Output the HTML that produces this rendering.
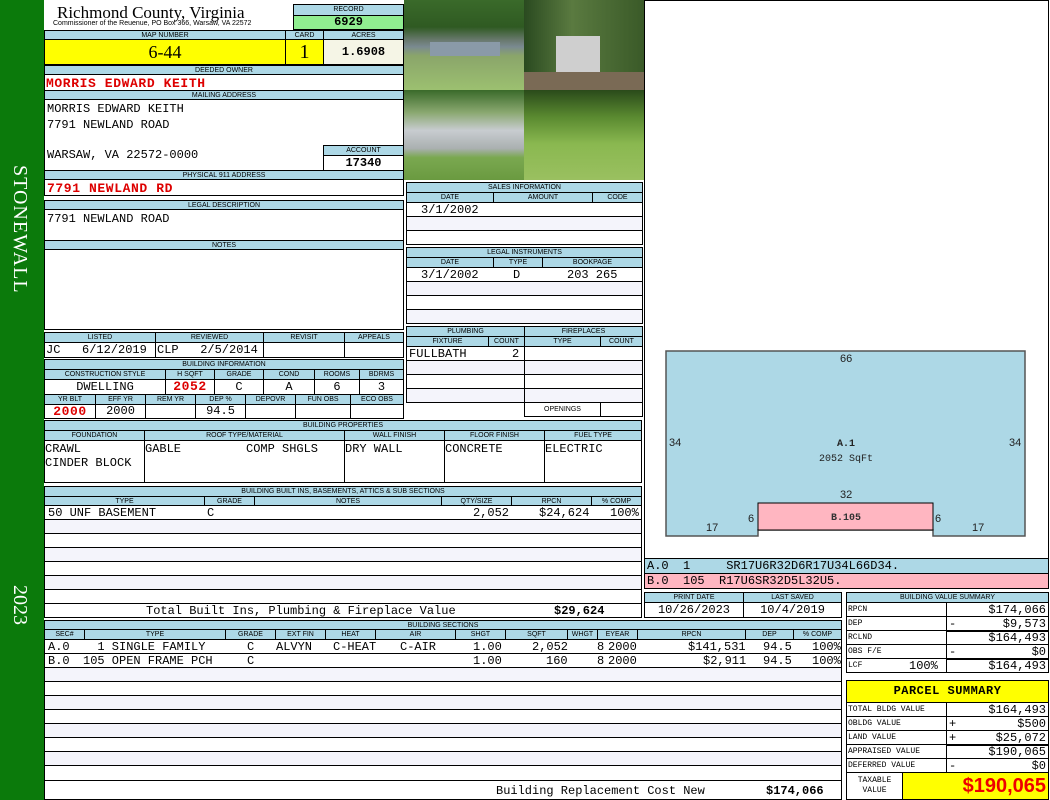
<!DOCTYPE html>
<html><head><meta charset="utf-8"><style>
*{margin:0;padding:0}
body{width:1050px;height:800px;position:relative;background:#fff;overflow:hidden;font-family:"Liberation Sans",sans-serif}
.b{position:absolute;box-sizing:border-box;border:1px solid #000;overflow:hidden;white-space:nowrap}
.h{background:#add8e6;font-size:7px;text-align:center;line-height:9px}
.m{font-family:"Liberation Mono",monospace;font-size:12px}
.r{color:#d00;font-weight:bold;font-size:13px;letter-spacing:0.6px}
.w{background:#fff}
.alt{background:#f4f4fb}
.g{color:#fff;font-family:"Liberation Serif",serif;font-size:20px;position:absolute}
</style></head><body>
<div style="position:absolute;left:0;top:0;width:44px;height:800px;background:#0b7a0b"></div>
<div class="g" style="left:8px;top:165px;writing-mode:vertical-rl;letter-spacing:1px">STONEWALL</div>
<div class="g" style="left:8px;top:585px;writing-mode:vertical-rl">2023</div>

<div style="position:absolute;left:57px;top:3px;font:17px 'Liberation Serif',serif">Richmond County, Virginia</div>
<div style="position:absolute;left:53px;top:20px;font-size:7px">Commissioner of the Reuenue, PO Box 366, Warsaw, VA 22572</div>
<div class="b h" style="left:293px;top:4px;width:111px;height:12px">RECORD</div>
<div class="b m" style="left:293px;top:15px;width:111px;height:15px;background:#90ee90;text-align:center;font-weight:bold;line-height:13px">6929</div>

<div class="b h" style="left:44px;top:30px;width:242px;height:10px">MAP NUMBER</div>
<div class="b h" style="left:285px;top:30px;width:39px;height:10px">CARD</div>
<div class="b h" style="left:323px;top:30px;width:81px;height:10px">ACRES</div>
<div class="b" style="left:44px;top:39px;width:242px;height:26px;background:#ff0;text-align:center;font:18px 'Liberation Serif',serif;line-height:24px">6-44</div>
<div class="b" style="left:285px;top:39px;width:39px;height:26px;background:#ff0;text-align:center;font:20px 'Liberation Serif',serif;line-height:24px">1</div>
<div class="b m" style="left:323px;top:39px;width:81px;height:26px;background:#f5f5e6;text-align:center;font-weight:bold;line-height:24px">1.6908</div>

<div class="b h" style="left:44px;top:65px;width:360px;height:10px">DEEDED OWNER</div>
<div class="b m r" style="left:44px;top:74px;width:360px;height:17px;line-height:17px;padding-left:1px">MORRIS EDWARD KEITH</div>
<div class="b h" style="left:44px;top:90px;width:360px;height:10px">MAILING ADDRESS</div>
<div class="b m" style="left:44px;top:99px;width:360px;height:72px;padding:2px 0 0 2px;line-height:15.5px">MORRIS EDWARD KEITH<br>7791 NEWLAND ROAD<br><br><span style="position:relative;top:-1px">WARSAW, VA 22572-0000</span></div>
<div class="b h" style="left:323px;top:145px;width:81px;height:11px">ACCOUNT</div>
<div class="b m" style="left:323px;top:155px;width:81px;height:16px;text-align:center;font-weight:bold;line-height:15px">17340</div>
<div class="b h" style="left:44px;top:170px;width:360px;height:10px">PHYSICAL 911 ADDRESS</div>
<div class="b m r" style="left:44px;top:179px;width:360px;height:17px;line-height:17px;padding-left:2px">7791 NEWLAND RD</div>

<div class="b h" style="left:44px;top:200px;width:360px;height:10px">LEGAL DESCRIPTION</div>
<div class="b m" style="left:44px;top:209px;width:360px;height:32px;padding:2px 0 0 2px">7791 NEWLAND ROAD</div>
<div class="b h" style="left:44px;top:240px;width:360px;height:10px">NOTES</div>
<div class="b" style="left:44px;top:249px;width:360px;height:81px"></div>

<div class="b h" style="left:44px;top:332px;width:112px;height:11px">LISTED</div>
<div class="b h" style="left:155px;top:332px;width:109px;height:11px">REVIEWED</div>
<div class="b h" style="left:263px;top:332px;width:82px;height:11px">REVISIT</div>
<div class="b h" style="left:344px;top:332px;width:60px;height:11px">APPEALS</div>
<div class="b m" style="left:44px;top:342px;width:112px;height:16px;line-height:14px;padding-left:1px">JC &nbsp;&nbsp;6/12/2019</div>
<div class="b m" style="left:155px;top:342px;width:109px;height:16px;line-height:14px;padding-left:1px">CLP &nbsp;&nbsp;2/5/2014</div>
<div class="b" style="left:263px;top:342px;width:82px;height:16px"></div>
<div class="b" style="left:344px;top:342px;width:60px;height:16px"></div>

<div class="b h" style="left:44px;top:359px;width:360px;height:11px">BUILDING INFORMATION</div>
<div class="b h" style="left:44px;top:369px;width:122px;height:11px">CONSTRUCTION STYLE</div>
<div class="b h" style="left:165px;top:369px;width:50px;height:11px">H SQFT</div>
<div class="b h" style="left:214px;top:369px;width:50px;height:11px">GRADE</div>
<div class="b h" style="left:263px;top:369px;width:52px;height:11px">COND</div>
<div class="b h" style="left:314px;top:369px;width:46px;height:11px">ROOMS</div>
<div class="b h" style="left:359px;top:369px;width:45px;height:11px">BDRMS</div>
<div class="b m" style="left:44px;top:379px;width:122px;height:16px;text-align:center;line-height:14px">DWELLING</div>
<div class="b m r" style="left:165px;top:379px;width:50px;height:16px;text-align:center;line-height:14px">2052</div>
<div class="b m" style="left:214px;top:379px;width:50px;height:16px;text-align:center;line-height:14px">C</div>
<div class="b m" style="left:263px;top:379px;width:52px;height:16px;text-align:center;line-height:14px">A</div>
<div class="b m" style="left:314px;top:379px;width:46px;height:16px;text-align:center;line-height:14px">6</div>
<div class="b m" style="left:359px;top:379px;width:45px;height:16px;text-align:center;line-height:14px">3</div>
<div class="b h" style="left:44px;top:394px;width:52px;height:11px">YR BLT</div>
<div class="b h" style="left:95px;top:394px;width:51px;height:11px">EFF YR</div>
<div class="b h" style="left:145px;top:394px;width:51px;height:11px">REM YR</div>
<div class="b h" style="left:195px;top:394px;width:51px;height:11px">DEP %</div>
<div class="b h" style="left:245px;top:394px;width:51px;height:11px">DEPOVR</div>
<div class="b h" style="left:295px;top:394px;width:56px;height:11px">FUN OBS</div>
<div class="b h" style="left:350px;top:394px;width:54px;height:11px">ECO OBS</div>
<div class="b m r" style="left:44px;top:404px;width:52px;height:15px;text-align:center;line-height:13px">2000</div>
<div class="b m" style="left:95px;top:404px;width:51px;height:15px;text-align:center;line-height:13px">2000</div>
<div class="b" style="left:145px;top:404px;width:51px;height:15px"></div>
<div class="b m" style="left:195px;top:404px;width:51px;height:15px;text-align:center;line-height:13px">94.5</div>
<div class="b" style="left:245px;top:404px;width:51px;height:15px"></div>
<div class="b" style="left:295px;top:404px;width:56px;height:15px"></div>
<div class="b" style="left:350px;top:404px;width:54px;height:15px"></div>

<div class="b h" style="left:44px;top:420px;width:598px;height:11px">BUILDING PROPERTIES</div>
<div class="b h" style="left:44px;top:430px;width:101px;height:11px">FOUNDATION</div>
<div class="b h" style="left:144px;top:430px;width:201px;height:11px">ROOF TYPE/MATERIAL</div>
<div class="b h" style="left:344px;top:430px;width:101px;height:11px">WALL FINISH</div>
<div class="b h" style="left:444px;top:430px;width:101px;height:11px">FLOOR FINISH</div>
<div class="b h" style="left:544px;top:430px;width:98px;height:11px">FUEL TYPE</div>
<div class="b m" style="left:44px;top:440px;width:101px;height:43px;line-height:14px;padding-top:1px">CRAWL<br>CINDER BLOCK</div>
<div class="b m" style="left:144px;top:440px;width:201px;height:43px;line-height:14px;padding-top:1px">GABLE<span style="position:absolute;left:101px">COMP SHGLS</span></div>
<div class="b m" style="left:344px;top:440px;width:101px;height:43px;line-height:14px;padding-top:1px">DRY WALL</div>
<div class="b m" style="left:444px;top:440px;width:101px;height:43px;line-height:14px;padding-top:1px">CONCRETE</div>
<div class="b m" style="left:544px;top:440px;width:98px;height:43px;line-height:14px;padding-top:1px">ELECTRIC</div>

<div class="b h" style="left:44px;top:486px;width:598px;height:11px">BUILDING BUILT INS, BASEMENTS, ATTICS &amp; SUB SECTIONS</div>
<div class="b h" style="left:44px;top:496px;width:161px;height:10px">TYPE</div>
<div class="b h" style="left:204px;top:496px;width:51px;height:10px">GRADE</div>
<div class="b h" style="left:254px;top:496px;width:188px;height:10px">NOTES</div>
<div class="b h" style="left:441px;top:496px;width:71px;height:10px">QTY/SIZE</div>
<div class="b h" style="left:511px;top:496px;width:81px;height:10px">RPCN</div>
<div class="b h" style="left:591px;top:496px;width:51px;height:10px">% COMP</div>
<div class="b m" style="left:44px;top:505px;width:598px;height:15px;line-height:14px;padding-left:3px">50 UNF BASEMENT<span style="position:absolute;left:162px">C</span><span style="position:absolute;left:428px">2,052</span><span style="position:absolute;left:494px">$24,624</span><span style="position:absolute;left:565px">100%</span></div>
<div class="b alt" style="left:44px;top:519px;width:598px;height:15px"></div>
<div class="b" style="left:44px;top:533px;width:598px;height:15px"></div>
<div class="b alt" style="left:44px;top:547px;width:598px;height:15px"></div>
<div class="b" style="left:44px;top:561px;width:598px;height:15px"></div>
<div class="b alt" style="left:44px;top:575px;width:598px;height:15px"></div>
<div class="b" style="left:44px;top:589px;width:598px;height:15px"></div>
<div class="b m" style="left:44px;top:603px;width:598px;height:15px;line-height:14px"><span style="position:absolute;left:101px">Total Built Ins, Plumbing &amp; Fireplace Value</span><span style="position:absolute;left:509px;font-weight:bold">$29,624</span></div>

<div class="b h" style="left:44px;top:620px;width:798px;height:10px">BUILDING SECTIONS</div>
<div class="b h" style="left:44px;top:629px;width:41px;height:11px">SEC#</div>
<div class="b h" style="left:84px;top:629px;width:142px;height:11px">TYPE</div>
<div class="b h" style="left:225px;top:629px;width:51px;height:11px">GRADE</div>
<div class="b h" style="left:275px;top:629px;width:51px;height:11px">EXT FIN</div>
<div class="b h" style="left:325px;top:629px;width:51px;height:11px">HEAT</div>
<div class="b h" style="left:375px;top:629px;width:81px;height:11px">AIR</div>
<div class="b h" style="left:455px;top:629px;width:51px;height:11px">SHGT</div>
<div class="b h" style="left:505px;top:629px;width:63px;height:11px">SQFT</div>
<div class="b h" style="left:567px;top:629px;width:31px;height:11px">WHGT</div>
<div class="b h" style="left:597px;top:629px;width:41px;height:11px">EYEAR</div>
<div class="b h" style="left:637px;top:629px;width:109px;height:11px">RPCN</div>
<div class="b h" style="left:745px;top:629px;width:49px;height:11px">DEP</div>
<div class="b h" style="left:793px;top:629px;width:49px;height:11px">% COMP</div>
<div class="b m" style="left:44px;top:639px;width:798px;height:15px;line-height:14px;padding-left:3px">A.0<span style="position:absolute;left:38px">&nbsp;&nbsp;1 SINGLE FAMILY</span><span style="position:absolute;left:202px">C</span><span style="position:absolute;left:231px">ALVYN</span><span style="position:absolute;left:288px">C-HEAT</span><span style="position:absolute;left:355px">C-AIR</span><span style="position:absolute;left:428px">1.00</span><span style="position:absolute;left:487px">2,052</span><span style="position:absolute;left:552px">8</span><span style="position:absolute;left:563px">2000</span><span style="position:absolute;left:643px">$141,531</span><span style="position:absolute;left:718px">94.5</span><span style="position:absolute;left:767px">100%</span></div>
<div class="b m" style="left:44px;top:653px;width:798px;height:15px;line-height:14px;padding-left:3px">B.0<span style="position:absolute;left:38px">105 OPEN FRAME PCH</span><span style="position:absolute;left:202px">C</span><span style="position:absolute;left:428px">1.00</span><span style="position:absolute;left:501px">160</span><span style="position:absolute;left:552px">8</span><span style="position:absolute;left:563px">2000</span><span style="position:absolute;left:658px">$2,911</span><span style="position:absolute;left:718px">94.5</span><span style="position:absolute;left:767px">100%</span></div>
<div class="b alt" style="left:44px;top:667px;width:798px;height:15px"></div>
<div class="b" style="left:44px;top:681px;width:798px;height:15px"></div>
<div class="b alt" style="left:44px;top:695px;width:798px;height:15px"></div>
<div class="b" style="left:44px;top:709px;width:798px;height:15px"></div>
<div class="b alt" style="left:44px;top:723px;width:798px;height:15px"></div>
<div class="b" style="left:44px;top:737px;width:798px;height:15px"></div>
<div class="b alt" style="left:44px;top:751px;width:798px;height:15px"></div>
<div class="b" style="left:44px;top:765px;width:798px;height:16px"></div>
<div class="b m" style="left:44px;top:780px;width:798px;height:20px;line-height:20px"><span style="position:absolute;left:451px">Building Replacement Cost New</span><span style="position:absolute;left:721px;font-weight:bold">$174,066</span></div>

<div style="position:absolute;left:404px;top:0;width:120px;height:90px;background:linear-gradient(#3a6a2a 0,#2f5a22 30%,#6a7a70 45%,#7a8a90 52%,#8aa56a 62%,#9cc070 100%)"></div>
<div style="position:absolute;left:430px;top:42px;width:70px;height:14px;background:#8a9aa8"></div>
<div style="position:absolute;left:524px;top:0;width:120px;height:90px;background:linear-gradient(90deg,#2a4a20,#5a7a40 40%,#3a5a28)"></div>
<div style="position:absolute;left:556px;top:36px;width:44px;height:38px;background:#cfcfcf"></div>
<div style="position:absolute;left:524px;top:72px;width:120px;height:18px;background:#7a6a55"></div>
<div style="position:absolute;left:404px;top:90px;width:120px;height:90px;background:linear-gradient(#3a6a2a 0,#8aa870 25%,#c8ccd0 45%,#aab0b0 65%,#7aa850 75%,#6a9a40 100%)"></div>
<div style="position:absolute;left:524px;top:90px;width:120px;height:90px;background:linear-gradient(#2a4a1a 0,#5a8a30 30%,#8ab850 60%,#9ac060 100%)"></div>

<div class="b h" style="left:406px;top:182px;width:237px;height:11px">SALES INFORMATION</div>
<div class="b h" style="left:406px;top:192px;width:88px;height:11px">DATE</div>
<div class="b h" style="left:493px;top:192px;width:100px;height:11px">AMOUNT</div>
<div class="b h" style="left:592px;top:192px;width:51px;height:11px">CODE</div>
<div class="b m" style="left:406px;top:202px;width:237px;height:15px;line-height:14px;padding-left:14px">3/1/2002</div>
<div class="b alt" style="left:406px;top:216px;width:237px;height:15px"></div>
<div class="b" style="left:406px;top:230px;width:237px;height:15px"></div>
<div class="b h" style="left:406px;top:247px;width:237px;height:11px">LEGAL INSTRUMENTS</div>
<div class="b h" style="left:406px;top:257px;width:88px;height:11px">DATE</div>
<div class="b h" style="left:493px;top:257px;width:50px;height:11px">TYPE</div>
<div class="b h" style="left:542px;top:257px;width:101px;height:11px">BOOKPAGE</div>
<div class="b m" style="left:406px;top:267px;width:237px;height:15px;line-height:14px;padding-left:14px">3/1/2002<span style="position:absolute;left:106px">D</span><span style="position:absolute;left:160px">203 265</span></div>
<div class="b alt" style="left:406px;top:281px;width:237px;height:15px"></div>
<div class="b" style="left:406px;top:295px;width:237px;height:15px"></div>
<div class="b alt" style="left:406px;top:309px;width:237px;height:15px"></div>

<div class="b h" style="left:406px;top:326px;width:119px;height:11px">PLUMBING</div>
<div class="b h" style="left:524px;top:326px;width:119px;height:11px">FIREPLACES</div>
<div class="b h" style="left:406px;top:336px;width:83px;height:11px">FIXTURE</div>
<div class="b h" style="left:488px;top:336px;width:37px;height:11px">COUNT</div>
<div class="b h" style="left:524px;top:336px;width:77px;height:11px">TYPE</div>
<div class="b h" style="left:600px;top:336px;width:43px;height:11px">COUNT</div>
<div class="b m" style="left:406px;top:346px;width:119px;height:15px;line-height:14px;padding-left:2px">FULLBATH<span style="position:absolute;left:105px">2</span></div>
<div class="b alt" style="left:406px;top:360px;width:119px;height:15px"></div>
<div class="b" style="left:406px;top:374px;width:119px;height:15px"></div>
<div class="b alt" style="left:406px;top:388px;width:119px;height:15px"></div>
<div class="b" style="left:524px;top:346px;width:119px;height:15px"></div>
<div class="b alt" style="left:524px;top:360px;width:119px;height:15px"></div>
<div class="b" style="left:524px;top:374px;width:119px;height:15px"></div>
<div class="b alt" style="left:524px;top:388px;width:119px;height:15px"></div>
<div class="b" style="left:524px;top:402px;width:77px;height:15px;font-size:7px;text-align:center;line-height:13px">OPENINGS</div>
<div class="b" style="left:600px;top:402px;width:43px;height:15px"></div>

<div class="b" style="left:644px;top:0;width:405px;height:559px"></div>
<svg style="position:absolute;left:0;top:0" width="1050" height="800">
<polygon points="666,351 1025,351 1025,536 933,536 933,530 758,530 758,536 666,536" fill="#add8e6" stroke="#555" stroke-width="1.5"/>
<rect x="758" y="503" width="175" height="27" fill="#ffb6c1" stroke="#000" stroke-width="1"/>
<g font-family="Liberation Sans" font-size="11" fill="#222">
<text x="840" y="362">66</text><text x="669" y="446">34</text><text x="1009" y="446">34</text>
<text x="840" y="498">32</text><text x="748" y="522">6</text><text x="935" y="522">6</text>
<text x="706" y="531">17</text><text x="972" y="531">17</text></g>
<g font-family="Liberation Mono" font-size="10" fill="#222" font-weight="bold" text-anchor="middle">
<text x="846" y="446">A.1</text><text x="846" y="461" font-weight="normal">2052 SqFt</text>
<text x="846" y="520" fill="#333">B.105</text></g>
</svg>
<div class="b m" style="left:644px;top:558px;width:405px;height:16px;background:#add8e6;line-height:14px;padding-left:2px">A.0 &nbsp;1 &nbsp;&nbsp;&nbsp;&nbsp;SR17U6R32D6R17U34L66D34.</div>
<div class="b m" style="left:644px;top:573px;width:405px;height:16px;background:#ffb6c1;line-height:14px;padding-left:2px">B.0 &nbsp;105 &nbsp;R17U6SR32D5L32U5.</div>

<div class="b h" style="left:644px;top:592px;width:100px;height:11px">PRINT DATE</div>
<div class="b h" style="left:743px;top:592px;width:99px;height:11px">LAST SAVED</div>
<div class="b m" style="left:644px;top:602px;width:100px;height:16px;text-align:center;line-height:14px">10/26/2023</div>
<div class="b m" style="left:743px;top:602px;width:99px;height:16px;text-align:center;line-height:14px">10/4/2019</div>

<div class="b h" style="left:846px;top:592px;width:203px;height:11px">BUILDING VALUE SUMMARY</div>
<div class="b" style="left:846px;top:602px;width:101px;height:15px;font:8px 'Liberation Mono';line-height:14px;padding-left:1px">RPCN</div>
<div class="b m" style="left:946px;top:602px;width:103px;height:15px;text-align:right;line-height:14px;padding-right:2px">$174,066</div>
<div class="b" style="left:846px;top:616px;width:101px;height:15px;font:8px 'Liberation Mono';line-height:14px;padding-left:1px">DEP</div>
<div class="b m" style="left:946px;top:616px;width:103px;height:15px;text-align:right;line-height:14px;padding-right:2px"><span style="float:left;padding-left:2px">-</span>$9,573</div>
<div class="b" style="left:846px;top:630px;width:101px;height:15px;font:8px 'Liberation Mono';line-height:14px;padding-left:1px">RCLND</div>
<div class="b m" style="left:946px;top:630px;width:103px;height:15px;text-align:right;line-height:12px;padding-right:2px;border-top:2px solid #000">$164,493</div>
<div class="b" style="left:846px;top:644px;width:101px;height:15px;font:8px 'Liberation Mono';line-height:14px;padding-left:1px">OBS F/E</div>
<div class="b m" style="left:946px;top:644px;width:103px;height:15px;text-align:right;line-height:14px;padding-right:2px"><span style="float:left;padding-left:2px">-</span>$0</div>
<div class="b" style="left:846px;top:658px;width:101px;height:15px;font:8px 'Liberation Mono';line-height:14px;padding-left:1px">LCF<span style="position:absolute;left:62px;font-size:12px">100%</span></div>
<div class="b m" style="left:946px;top:658px;width:103px;height:15px;text-align:right;line-height:12px;padding-right:2px;border-top:2px solid #000">$164,493</div>

<div class="b m" style="left:846px;top:680px;width:203px;height:23px;background:#ff0;text-align:center;font-weight:bold;line-height:21px;letter-spacing:0.5px">PARCEL SUMMARY</div>
<div class="b" style="left:846px;top:702px;width:101px;height:15px;font:8px 'Liberation Mono';line-height:14px;padding-left:1px">TOTAL BLDG VALUE</div>
<div class="b m" style="left:946px;top:702px;width:103px;height:15px;text-align:right;line-height:14px;padding-right:2px">$164,493</div>
<div class="b" style="left:846px;top:716px;width:101px;height:15px;font:8px 'Liberation Mono';line-height:14px;padding-left:1px">OBLDG VALUE</div>
<div class="b m" style="left:946px;top:716px;width:103px;height:15px;text-align:right;line-height:14px;padding-right:2px"><span style="float:left;padding-left:2px">+</span>$500</div>
<div class="b" style="left:846px;top:730px;width:101px;height:15px;font:8px 'Liberation Mono';line-height:14px;padding-left:1px">LAND VALUE</div>
<div class="b m" style="left:946px;top:730px;width:103px;height:15px;text-align:right;line-height:14px;padding-right:2px"><span style="float:left;padding-left:2px">+</span>$25,072</div>
<div class="b" style="left:846px;top:744px;width:101px;height:15px;font:8px 'Liberation Mono';line-height:14px;padding-left:1px">APPRAISED VALUE</div>
<div class="b m" style="left:946px;top:744px;width:103px;height:15px;text-align:right;line-height:12px;padding-right:2px;border-top:2px solid #000">$190,065</div>
<div class="b" style="left:846px;top:758px;width:101px;height:15px;font:8px 'Liberation Mono';line-height:14px;padding-left:1px">DEFERRED VALUE</div>
<div class="b m" style="left:946px;top:758px;width:103px;height:15px;text-align:right;line-height:14px;padding-right:2px"><span style="float:left;padding-left:2px">-</span>$0</div>
<div class="b" style="left:846px;top:772px;width:57px;height:28px;font:8px 'Liberation Mono';line-height:10px;text-align:center;padding-top:3px">TAXABLE<br>VALUE</div>
<div class="b" style="left:902px;top:772px;width:147px;height:28px;background:#ff0;color:#e00;font-weight:bold;font-size:20px;text-align:right;line-height:26px;padding-right:2px">$190,065</div>
</body></html>
